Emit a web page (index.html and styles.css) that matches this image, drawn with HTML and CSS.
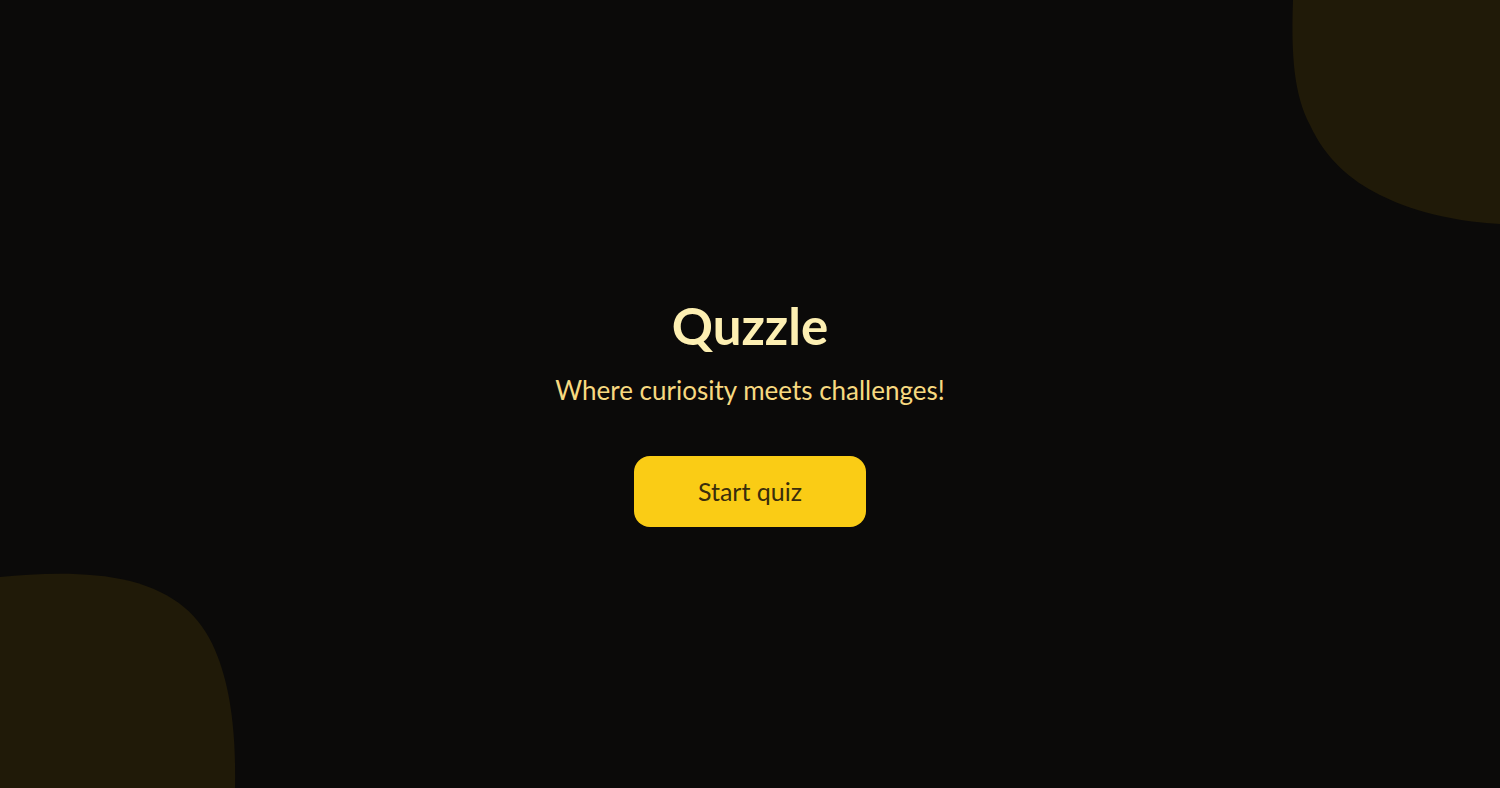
FILE: index.html
```html
<!DOCTYPE html>
<html lang="en">
<head>
<meta charset="utf-8">
<title>Quzzle</title>
<link rel="stylesheet" href="styles.css">
</head>
<body>
<svg class="blobs" width="1500" height="788" viewBox="0 0 1500 788" aria-hidden="true">
  <path fill="#201a08" d="M1293,0 C1291,55 1294,95 1310,125 C1325,158 1350,180 1380,195 C1420,215 1465,222 1500,224 L1500,0 Z"/>
  <path fill="#201a08" d="M0,577 C40,573 90,571 130,581 C175,593 200,615 215,650 C230,685 236,730 235,788 L0,788 Z"/>
</svg>
<main class="hero">
  <h1 class="title">Quzzle</h1>
  <p class="subtitle">Where curiosity meets challenges!</p>
  <button class="start">Start quiz</button>
</main>
</body>
</html>
```
FILE: styles.css
```css
html, body {
  margin: 0;
  height: 100%;
}
body {
  background: #0b0a09;
  font-family: "Lato", "Noto Sans", sans-serif;
  overflow: hidden;
  position: relative;
}
.blobs {
  position: absolute;
  top: 0;
  left: 0;
  z-index: 0;
}
.hero {
  position: relative;
  z-index: 1;
  height: 100%;
  display: flex;
  flex-direction: column;
  align-items: center;
  justify-content: center;
  padding-top: 34px;
  box-sizing: border-box;
}
.title {
  margin: 0;
  font-size: 51px;
  font-weight: 700;
  color: #fdefb2;
  line-height: 60px;
}
.subtitle {
  margin: 18px 0 0;
  font-size: 26px;
  color: #f7d980;
  line-height: 32px;
}
.start {
  margin-top: 50px;
  width: 232px;
  height: 71px;
  border: none;
  border-radius: 16px;
  background: #facc15;
  color: #3a2e0c;
  font-family: inherit;
  font-size: 25px;
  cursor: pointer;
}
```
